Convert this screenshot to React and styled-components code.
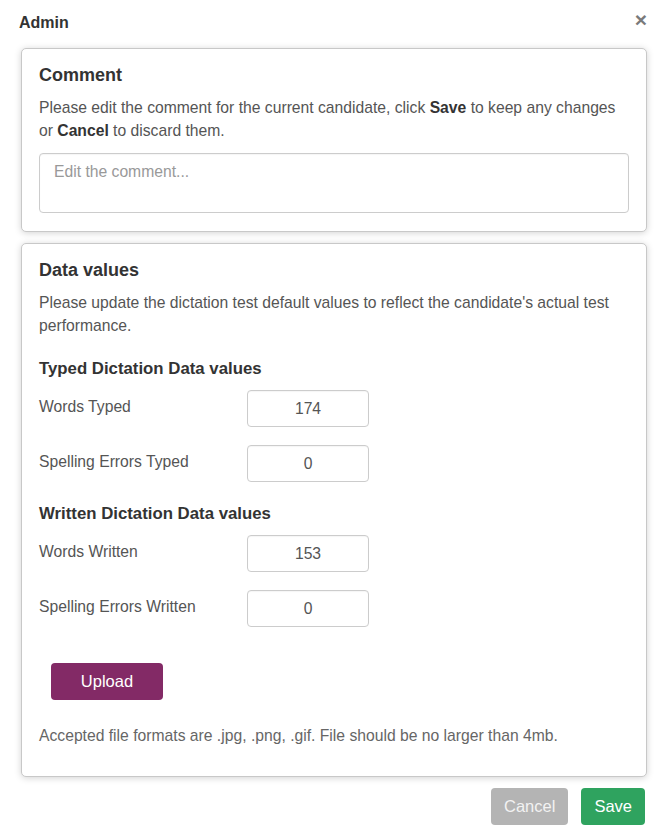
import { createGlobalStyle, styled } from "styled-components";

const GlobalStyle = createGlobalStyle`
    body {
        margin: 0;
        background: #ffffff;
        font-family: "Liberation Sans", Arial, sans-serif;
        color: #555555;
    }
`;

const typedRows = [
    { label: "Words Typed", value: "174" },
    { label: "Spelling Errors Typed", value: "0" },
];

const writtenRows = [
    { label: "Words Written", value: "153" },
    { label: "Spelling Errors Written", value: "0" },
];

function ValueRow({ label, value }) {
    return (
        <Row>
            <RowLabel>{label}</RowLabel>
            <NumberInput type="text" defaultValue={value} />
        </Row>
    );
}

export default function App() {
    return (
        <>
            <GlobalStyle />
            <Modal>
                <Header>
                    <Title>Admin</Title>
                    <CloseButton aria-label="close">×</CloseButton>
                </Header>

                <Panel>
                    <PanelTitle>Comment</PanelTitle>
                    <Text>
                        Please edit the comment for the current candidate,
                        click <b>Save</b> to keep any changes or{" "}
                        <b>Cancel</b> to discard them.
                    </Text>
                    <CommentBox placeholder="Edit the comment..." />
                </Panel>

                <Panel>
                    <PanelTitle>Data values</PanelTitle>
                    <Text>
                        Please update the dictation test default values to
                        reflect the candidate's actual test performance.
                    </Text>

                    <SubTitle>Typed Dictation Data values</SubTitle>
                    <Rows>
                        {typedRows.map((r) => (
                            <ValueRow key={r.label} {...r} />
                        ))}
                    </Rows>

                    <SubTitle>Written Dictation Data values</SubTitle>
                    <Rows>
                        {writtenRows.map((r) => (
                            <ValueRow key={r.label} {...r} />
                        ))}
                    </Rows>

                    <UploadButton>Upload</UploadButton>
                    <Note>
                        Accepted file formats are .jpg, .png, .gif. File should
                        be no larger than 4mb.
                    </Note>
                </Panel>

                <Footer>
                    <ActionButton $variant="cancel">Cancel</ActionButton>
                    <ActionButton $variant="save">Save</ActionButton>
                </Footer>
            </Modal>
        </>
    );
}

const Modal = styled.div`
    width: 668px;
    box-sizing: border-box;
    padding: 0 21px 13px;
    display: flex;
    flex-direction: column;
    gap: 11px;
`;

const Header = styled.header`
    height: 37px;
    display: flex;
    align-items: center;
    justify-content: space-between;
`;

const Title = styled.h1`
    margin: 0 0 0 -2px;
    font-size: 16px;
    font-weight: bold;
    color: #333333;
    padding-top: 9px;
`;

const CloseButton = styled.button`
    border: none;
    background: none;
    padding: 0;
    margin-top: 1px;
    font-family: "Liberation Sans", Arial, sans-serif;
    font-size: 21px;
    font-weight: bold;
    line-height: 1;
    color: #7a7a7a;
    cursor: pointer;
`;

const Panel = styled.section`
    border: 1px solid #c8c8c8;
    border-radius: 5px;
    background: #ffffff;
    box-shadow: 0 1px 7px rgba(0, 0, 0, 0.18);
    padding: 16px 17px 18px;
    display: flex;
    flex-direction: column;
    align-items: flex-start;
`;

const PanelTitle = styled.h2`
    margin: 0;
    font-size: 18px;
    line-height: 20px;
    font-weight: bold;
    color: #333333;
`;

const Text = styled.p`
    margin: 11px 0 0;
    font-size: 15.7px;
    line-height: 23px;
    color: #555555;

    b {
        color: #333333;
    }
`;

const CommentBox = styled.textarea`
    margin-top: 11px;
    width: 100%;
    height: 60px;
    box-sizing: border-box;
    border: 1px solid #cccccc;
    border-radius: 4px;
    padding: 8px 14px;
    font-family: "Liberation Sans", Arial, sans-serif;
    font-size: 15.7px;
    line-height: 20px;
    color: #555555;
    resize: none;
    outline: none;
    box-shadow: inset 0 1px 1px rgba(0, 0, 0, 0.04);

    &::placeholder {
        color: #999999;
    }
`;

const SubTitle = styled.h3`
    margin: 22px 0 0;
    font-size: 16.8px;
    line-height: 20px;
    font-weight: bold;
    color: #333333;
`;

const Rows = styled.div`
    margin-top: 11px;
    display: flex;
    flex-direction: column;
    gap: 18px;
`;

const Row = styled.div`
    display: grid;
    grid-template-columns: 208px 122px;
    align-items: center;
`;

const RowLabel = styled.label`
    font-size: 15.7px;
    line-height: 20px;
    color: #555555;
    margin-top: -3px;
`;

const NumberInput = styled.input`
    width: 122px;
    height: 37px;
    box-sizing: border-box;
    border: 1px solid #cccccc;
    border-radius: 4px;
    text-align: center;
    font-family: "Liberation Sans", Arial, sans-serif;
    font-size: 15.7px;
    color: #555555;
    outline: none;
    box-shadow: inset 0 1px 1px rgba(0, 0, 0, 0.04);
`;

const UploadButton = styled.button`
    margin: 36px 0 0 12px;
    width: 112px;
    height: 37px;
    border: none;
    border-radius: 4px;
    background: #832a66;
    color: #ffffff;
    font-family: "Liberation Sans", Arial, sans-serif;
    font-size: 16.5px;
    cursor: pointer;
`;

const Note = styled.p`
    margin: 24px 0 11px;
    font-size: 15.7px;
    line-height: 23px;
    color: #666666;
`;

const Footer = styled.footer`
    display: flex;
    justify-content: flex-end;
    gap: 13px;
    padding-right: 2px;
`;

const ActionButton = styled.button`
    height: 37px;
    padding: 0 13px;
    border: none;
    border-radius: 4px;
    background: ${(p) => (p.$variant === "cancel" ? "#b4b4b4" : "#2fa35f")};
    color: ${(p) => (p.$variant === "cancel" ? "#f2f2f2" : "#ffffff")};
    font-family: "Liberation Sans", Arial, sans-serif;
    font-size: 16.5px;
    cursor: pointer;
`;
